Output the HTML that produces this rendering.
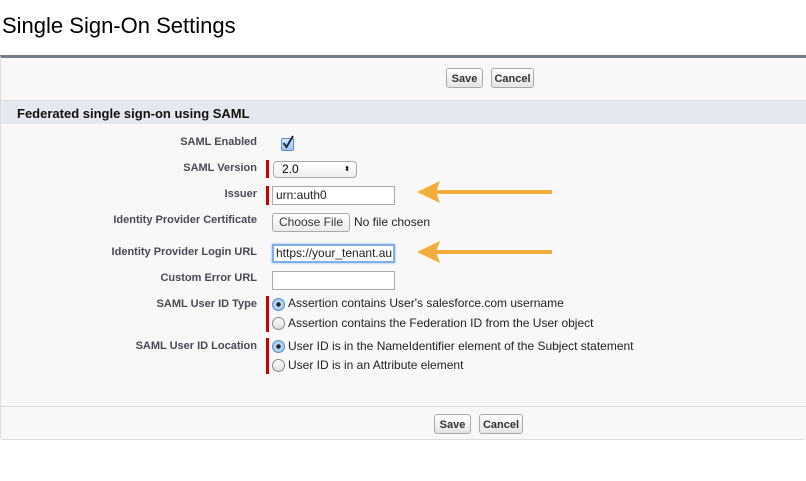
<!DOCTYPE html>
<html><head><style>
body{margin:0;width:806px;height:481px;background:#fff;font-family:"Liberation Sans",Arial,sans-serif;position:relative;overflow:hidden}
.a{position:absolute}
.lbl{position:absolute;right:549px;font-size:11px;font-weight:bold;color:#4a4a56;white-space:nowrap}
.req{position:absolute;left:266px;width:3px;background:#c00}
.btn{position:absolute;height:20px;border:1px solid #aaa;border-radius:3px;background:linear-gradient(#fff,#e4e4e4);font-size:11px;font-weight:bold;color:#333;text-align:center;line-height:20px;box-sizing:border-box}
.inp{position:absolute;left:272px;width:123px;height:19px;border:1px solid #aaa;background:#fff;box-sizing:border-box;font-size:12px;line-height:17px;padding-left:3px;color:#222;overflow:hidden;white-space:nowrap}
.txt{position:absolute;font-size:12px;color:#222;white-space:nowrap}
.rad{position:absolute;left:272px;width:13px;height:13px;border-radius:50%;border:1px solid #888;background:linear-gradient(#fff,#ddd);box-sizing:border-box}
.rad.on{background:radial-gradient(circle,#222 0 2px,#bfdcf5 2.5px,#7fb4e8 100%);border-color:#5c8fc7}
</style></head><body>
<div class="a" style="left:2px;top:13px;font-size:22px;color:#000">Single Sign-On Settings</div>
<div class="a" style="left:0;top:55px;width:806px;height:385px;background:#f8f8f8;border-top:3px solid #737b88;border-left:1px solid #ddd;border-bottom:1px solid #ddd;border-radius:0 0 4px 4px;box-sizing:border-box"></div>
<div class="btn" style="left:446px;top:68px;width:37px">Save</div>
<div class="btn" style="left:491px;top:68px;width:43px">Cancel</div>
<div class="a" style="left:1px;top:100px;width:805px;height:1px;background:#ddd"></div>
<div class="a" style="left:1px;top:101px;width:805px;height:23px;background:#e5e8ef"></div>
<div class="a" style="left:17px;top:106px;font-size:13px;font-weight:bold;color:#111">Federated single sign-on using SAML</div>

<div class="lbl" style="top:136px">SAML Enabled</div>
<div class="a" style="left:281px;top:138px;width:11px;height:11px;border:1px solid #5c8fc7;border-radius:2px;background:linear-gradient(#d7e9fa,#9cc5ee)"></div>
<svg class="a" style="left:280px;top:134px" width="16" height="16"><path d="M3.5 9L6.5 13L13 2" stroke="#1a2a40" stroke-width="2" fill="none"/></svg>

<div class="lbl" style="top:162px">SAML Version</div>
<div class="req" style="top:160px;height:18px"></div>
<div class="a" style="left:273px;top:161px;width:84px;height:17px;border:1px solid #aaa;border-radius:4px;background:linear-gradient(#fff,#eee);box-sizing:border-box;font-size:12px;line-height:15px;padding-left:8px">2.0<span style="position:absolute;right:6px;top:0;font-size:7px">⬍</span></div>

<div class="lbl" style="top:188px">Issuer</div>
<div class="req" style="top:186px;height:19px"></div>
<div class="inp" style="top:186px">urn:auth0</div>
<svg class="a" style="left:412px;top:178px" width="145" height="28"><path d="M140 14H22" stroke="#f3ad3c" stroke-width="4" fill="none"/><path d="M5 14L28 3L24 14L28 25Z" fill="#f3ad3c"/></svg>

<div class="lbl" style="top:214px">Identity Provider Certificate</div>
<div class="btn" style="left:272px;top:213px;width:78px;height:19px;line-height:17px;font-weight:normal;font-size:12px;background:linear-gradient(#fff,#ebebeb)">Choose File</div>
<div class="txt" style="left:354px;top:215px">No file chosen</div>

<div class="lbl" style="top:246px">Identity Provider Login URL</div>
<div class="inp" style="top:244px;border:2px solid #7fb0e4;box-shadow:0 0 2px #7fb0e4;line-height:15px;padding-left:2px">https://your_tenant.au</div>
<svg class="a" style="left:412px;top:238px" width="145" height="28"><path d="M140 14H22" stroke="#f3ad3c" stroke-width="4" fill="none"/><path d="M5 14L28 3L24 14L28 25Z" fill="#f3ad3c"/></svg>

<div class="lbl" style="top:272px">Custom Error URL</div>
<div class="inp" style="top:271px"></div>

<div class="lbl" style="top:298px">SAML User ID Type</div>
<div class="req" style="top:296px;height:36px"></div>
<div class="rad on" style="top:298px"></div>
<div class="txt" style="left:288px;top:296px">Assertion contains User's salesforce.com username</div>
<div class="rad" style="top:317px"></div>
<div class="txt" style="left:288px;top:316px">Assertion contains the Federation ID from the User object</div>

<div class="lbl" style="top:340px">SAML User ID Location</div>
<div class="req" style="top:338px;height:36px"></div>
<div class="rad on" style="top:340px"></div>
<div class="txt" style="left:288px;top:339px">User ID is in the NameIdentifier element of the Subject statement</div>
<div class="rad" style="top:359px"></div>
<div class="txt" style="left:288px;top:358px">User ID is in an Attribute element</div>

<div class="a" style="left:1px;top:406px;width:805px;height:1px;background:#ddd"></div>
<div class="btn" style="left:434px;top:414px;width:37px">Save</div>
<div class="btn" style="left:479px;top:414px;width:44px">Cancel</div>
</body></html>
